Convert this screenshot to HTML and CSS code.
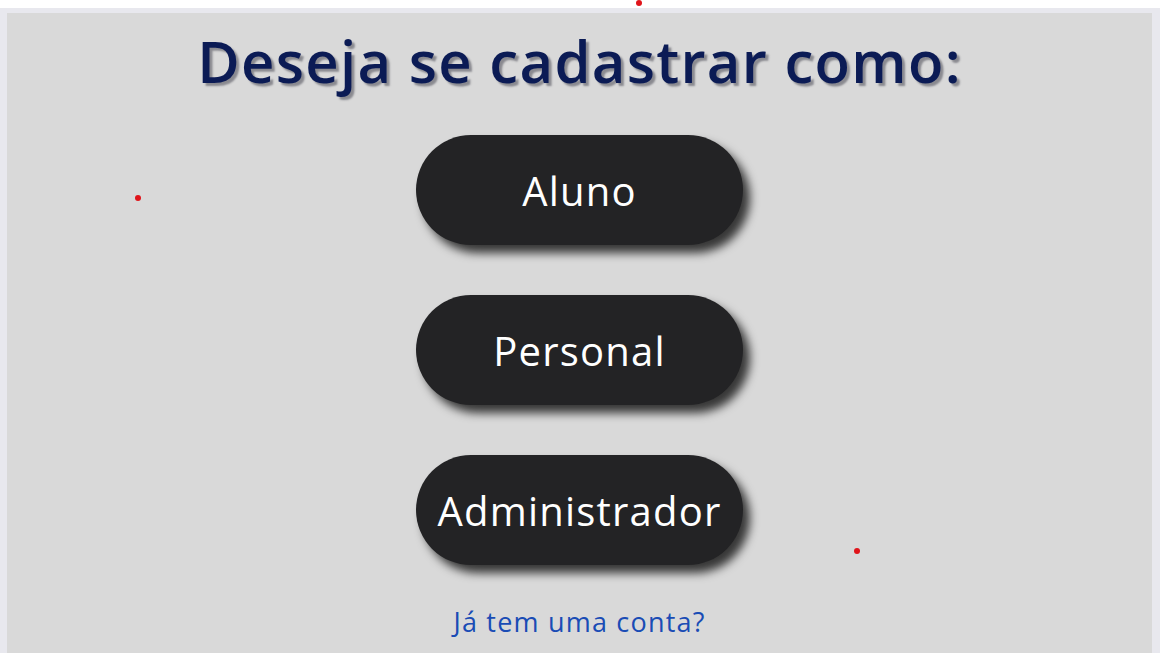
FILE: index.html
```html
<!DOCTYPE html>
<html lang="pt-BR">
<head>
<meta charset="utf-8">
<title>Cadastro</title>
<link rel="stylesheet" href="styles.css">
</head>
<body>
<div class="frame">
  <main class="panel">
    <h1 class="title">Deseja se cadastrar como:</h1>
    <div class="choices">
      <button class="choice">Aluno</button>
      <button class="choice">Personal</button>
      <button class="choice">Administrador</button>
    </div>
    <a class="login-link" href="#">Já tem uma conta?</a>
  </main>
</div>
<span class="dot dot-top"></span>
<span class="dot dot-left"></span>
<span class="dot dot-right"></span>
</body>
</html>
```
FILE: styles.css
```css
html, body {
  margin: 0;
  padding: 0;
  background: #ffffff;
  overflow: hidden;
}
body {
  height: 653px;
  padding-top: 8px;
  box-sizing: border-box;
  font-family: "Open Sans", "Liberation Sans", sans-serif;
}
.frame {
  background: #e8e8ee;
  padding: 5px 8px 0 7px;
  height: 645px;
  box-sizing: border-box;
}
.panel {
  background: #d9d9d9;
  height: 100%;
  display: flex;
  flex-direction: column;
  align-items: center;
}
.title {
  margin: 13px 0 0;
  font-size: 58px;
  line-height: 70px;
  font-weight: 600;
  color: #0b1b55;
  text-shadow: 3px 3px 2px #8a8a90;
  letter-spacing: 1.3px;
}
.choices {
  margin-top: 39px;
  display: flex;
  flex-direction: column;
  gap: 50px;
}
.choice {
  width: 327px;
  height: 110px;
  border: none;
  border-radius: 55px;
  background: #232325;
  color: #ffffff;
  font-family: inherit;
  font-size: 40px;
  font-weight: 500;
  letter-spacing: 1.2px;
  box-shadow: 7px 8px 10px rgba(0,0,0,0.75);
  cursor: pointer;
}
.login-link {
  margin-top: 38px;
  color: #1a4cb5;
  font-size: 27px;
  letter-spacing: 1.2px;
  text-decoration: none;
}
.dot {
  position: absolute;
  width: 6px;
  height: 6px;
  border-radius: 50%;
  background: #e0141a;
}
.dot-top { left: 636px; top: 0px; }
.dot-left { left: 135px; top: 195px; }
.dot-right { left: 854px; top: 548px; }
```
